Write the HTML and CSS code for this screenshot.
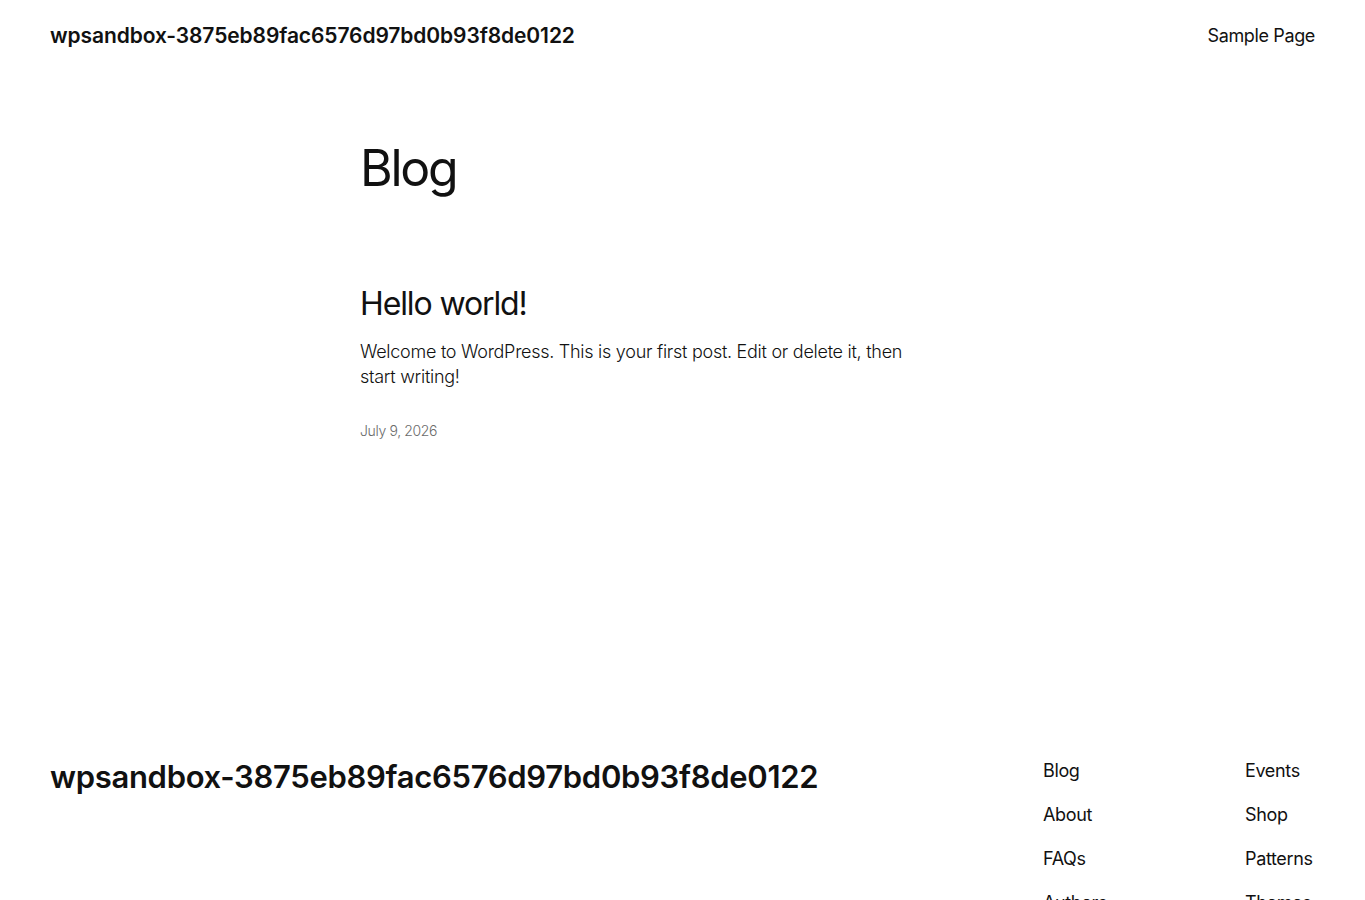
FILE: index.html
```html
<!DOCTYPE html>
<html lang="en">
<head>
<meta charset="utf-8">
<title>Blog</title>
<link rel="stylesheet" href="styles.css">
</head>
<body>
<header class="site-header">
  <a class="site-title" href="#">wpsandbox-3875eb89fac6576d97bd0b93f8de0122</a>
  <nav class="main-nav"><a href="#">Sample Page</a></nav>
</header>
<main class="content">
  <h1 class="page-title">Blog</h1>
  <article class="post">
    <h2 class="post-title">Hello world!</h2>
    <p class="excerpt">Welcome to WordPress. This is your first post. Edit or delete it, then start writing!</p>
    <div class="post-date">July 9, 2026</div>
  </article>
</main>
<footer class="site-footer">
  <a class="footer-title" href="#">wpsandbox-3875eb89fac6576d97bd0b93f8de0122</a>
  <div class="footer-navs">
    <ul class="footer-col">
      <li><a href="#">Blog</a></li>
      <li><a href="#">About</a></li>
      <li><a href="#">FAQs</a></li>
      <li><a href="#">Authors</a></li>
    </ul>
    <ul class="footer-col">
      <li><a href="#">Events</a></li>
      <li><a href="#">Shop</a></li>
      <li><a href="#">Patterns</a></li>
      <li><a href="#">Themes</a></li>
    </ul>
  </div>
</footer>
</body>
</html>
```

FILE: styles.css
```css
* { box-sizing: border-box; }
html, body { margin: 0; padding: 0; background: #fff; }
body {
  font-family: Inter, "Noto Sans", sans-serif;
  color: #111;
  font-size: 18px;
  font-weight: 300;
  letter-spacing: -0.02em;
}
a { color: inherit; text-decoration: none; }

.site-header {
  display: flex;
  justify-content: space-between;
  align-items: center;
  padding: 22px 50px;
  height: 70px;
}
.site-title {
  font-size: 21px;
  font-weight: 600;
  letter-spacing: -0.005em;
}
.main-nav a { font-size: 18px; font-weight: 400; }

.content {
  width: 645px;
  margin: 0 auto;
  min-height: 622px;
}
.page-title {
  margin: 68px 0 0;
  font-size: 50px;
  font-weight: 400;
  line-height: 61px;
  letter-spacing: -0.045em;
}
.post { margin-top: 86px; }
.post-title {
  margin: 0;
  font-size: 32px;
  font-weight: 400;
  line-height: 1.2;
  letter-spacing: -0.035em;
}
.excerpt {
  margin: 16px 0 0;
  max-width: 580px;
  font-size: 18px;
  line-height: 25px;
  letter-spacing: -0.015em;
}
.post-date {
  margin-top: 33px;
  font-size: 14px;
  color: #6b6b6b;
}

.site-footer {
  display: flex;
  justify-content: space-between;
  align-items: flex-start;
  padding: 0 50px;
}
.footer-title {
  font-size: 31px;
  font-weight: 600;
  letter-spacing: -0.01em;
  line-height: 1.2;
  margin-top: -2px;
}
.footer-navs {
  display: grid;
  grid-template-columns: 202px 70px;
  margin-top: -1px;
}
.footer-col {
  list-style: none;
  margin: 0;
  padding: 0;
}
.footer-col li {
  font-size: 18px;
  font-weight: 400;
  line-height: 24px;
  margin-bottom: 20px;
  white-space: nowrap;
}
```
